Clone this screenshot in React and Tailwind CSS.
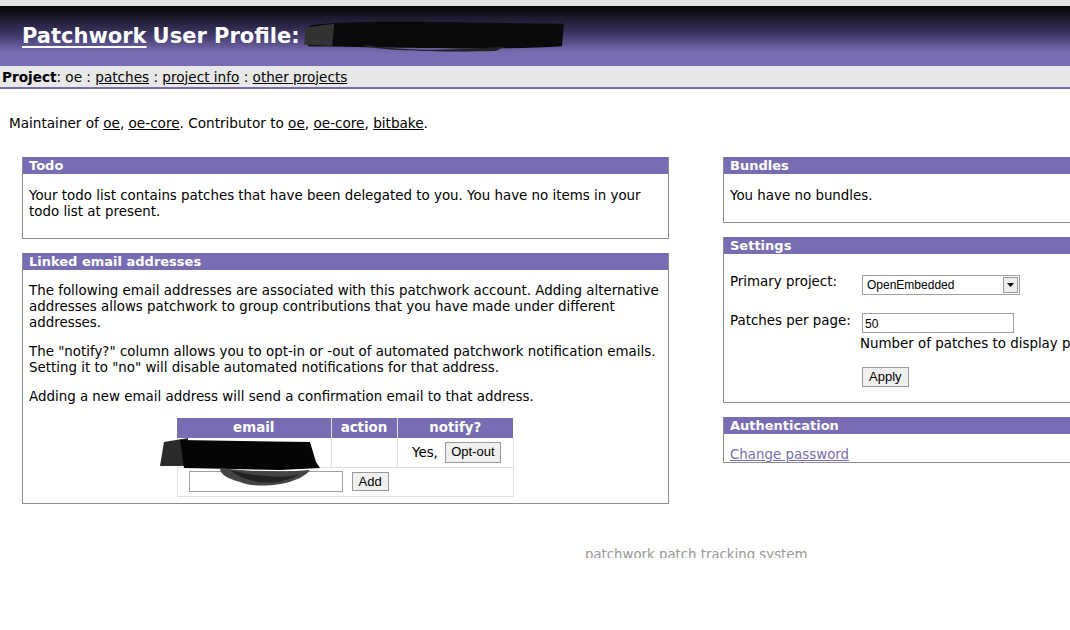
import React from "react";

const font = { fontFamily: '"DejaVu Sans", Verdana, sans-serif' };
const arial = { fontFamily: '"Liberation Sans", Arial, sans-serif' };

function Box({ title, children, className = "" }) {
  return (
    <div className={"border border-[#8c8c8c] border-t-0 bg-white " + className}>
      <div className="bg-[#786db3] text-white font-bold text-[13px] leading-[17px] px-[6px]">{title}</div>
      {children}
    </div>
  );
}

function Scribble({ w, h }) {
  return (
    <svg width={w} height={h} viewBox="0 0 260 36" preserveAspectRatio="none" className="block">
      <path d="M6 8 C40 2 120 4 258 6 L256 30 C200 34 120 32 4 30 Z" fill="#0a0a0a" />
      <path d="M2 10 L30 6 L28 30 L0 28 Z" fill="#333" />
      <path d="M60 28 C100 36 160 34 200 30 L190 35 C150 36 90 36 60 30Z" fill="#222" />
    </svg>
  );
}

export default function App() {
  return (
    <div className="w-[1070px] h-[630px] overflow-hidden bg-white text-black text-[13.4px] leading-[16px]" style={font}>
      <div className="h-[6px] bg-[#e2e2e2]" />
      <div className="h-[60px] bg-[linear-gradient(to_bottom,#050505_0%,#3a3460_45%,#786db3_78%,#786db3_100%)] flex items-center pl-[22px]">
        <h1 className="text-white font-bold text-[21px] leading-[26px] flex items-center">
          <span className="underline underline-offset-[3px] decoration-2">Patchwork</span>
          <span className="ml-[6px]">User Profile:</span>
          <span className="ml-[4px] -mt-[2px]"><Scribble w={262} h={34} /></span>
        </h1>
      </div>
      <div className="h-[21px] bg-[#e8e8e8] border-b-2 border-[#786db3] pl-[2px] flex items-center box-content text-[13.6px]">
        <span><b>Project</b>: oe : <a className="underline">patches</a> : <a className="underline">project info</a> : <a className="underline">other projects</a></span>
      </div>

      <p className="pl-[9px] mt-[26px] text-[13.6px]">
        Maintainer of <a className="underline">oe</a>, <a className="underline">oe-core</a>. Contributor to <a className="underline">oe</a>, <a className="underline">oe-core</a>, <a className="underline">bitbake</a>.
      </p>

      <div className="flex mt-[26px] pl-[22px] gap-[54px]">
        <div className="w-[647px] shrink-0 flex flex-col gap-[14px]">
          <Box title="Todo" className="h-[82px]">
            <p className="px-[6px] pt-[14px]">
              Your todo list contains patches that have been delegated to you. You have no items in your<br />todo list at present.
            </p>
          </Box>
          <Box title="Linked email addresses" className="h-[251px]">
            <div className="px-[6px] pt-[13px] flex flex-col gap-[13px]">
              <p>The following email addresses are associated with this patchwork account. Adding alternative<br />addresses allows patchwork to group contributions that you have made under different<br />addresses.</p>
              <p>The "notify?" column allows you to opt-in or -out of automated patchwork notification emails.<br />Setting it to "no" will disable automated notifications for that address.</p>
              <p>Adding a new email address will send a confirmation email to that address.</p>
            </div>
            <div className="flex justify-center mt-[13px] pr-[1px] relative">
              <table className="border-collapse">
                <thead>
                  <tr className="bg-[#786db3] text-white font-bold">
                    <th className="w-[154px] h-[20px] border-r border-[#e0e0e0]">email</th>
                    <th className="w-[66px] border-r border-[#e0e0e0]">action</th>
                    <th className="w-[116px]">notify?</th>
                  </tr>
                </thead>
                <tbody>
                  <tr className="h-[29px]">
                    <td className="border border-[#e0e0e0] border-t-0"></td>
                    <td className="border border-[#e0e0e0] border-t-0"></td>
                    <td className="border border-[#e0e0e0] border-t-0 text-right pr-[12px] whitespace-nowrap">
                      Yes,{" "}
                      <button className="bg-[#f0f0f0] border border-[#9a9a9a] px-[5px] h-[21px] text-[13px] ml-[3px]" style={arial}>Opt-out</button>
                    </td>
                  </tr>
                  <tr className="h-[29px]">
                    <td colSpan={3} className="border border-[#e0e0e0] pl-[11px]">
                      <div className="flex items-center gap-[9px]">
                        <input className="w-[154px] h-[21px] border border-[#a0a0a0] bg-white" />
                        <button className="bg-[#f0f0f0] border border-[#9a9a9a] px-[6px] h-[19px] text-[13px] leading-[17px]" style={arial}>Add</button>
                      </div>
                    </td>
                  </tr>
                </tbody>
              </table>
              <div className="absolute left-[137px] top-[20px]">
                <svg width="166" height="56" viewBox="0 0 166 56">
                  <path d="M4 4 L28 0 L26 28 L0 28 Z" fill="#2a2a2a" />
                  <path d="M20 2 L150 4 L156 24 L160 30 L120 32 L24 30 Z" fill="#050505" />
                  <path d="M60 30 C90 34 130 34 150 32 C140 46 100 52 80 44 C66 40 60 36 60 30Z" fill="#444" />
                  <path d="M70 32 C100 40 130 40 140 36 C120 48 90 48 70 32Z" fill="#222" />
                </svg>
              </div>
            </div>
          </Box>
        </div>

        <div className="w-[420px] shrink-0 flex flex-col gap-[14px]">
          <Box title="Bundles" className="h-[66px]">
            <p className="px-[6px] pt-[14px]">You have no bundles.</p>
          </Box>
          <Box title="Settings" className="h-[166px]">
            <div className="px-[6px] pt-[21px] grid grid-cols-[132px_1fr] gap-y-[18px]">
              <span className="self-start -mt-[1px]">Primary project:</span>
              <div className="flex">
                <div className="w-[158px] h-[20px] border border-[#a0a0a0] flex items-center justify-between pl-[4px] pr-[1px] text-[12px]" style={arial}>
                  <span>OpenEmbedded</span>
                  <span className="w-[15px] h-[16px] bg-[#eee] border border-[#999] flex items-center justify-center">
                    <svg width="7" height="4" viewBox="0 0 7 4"><path d="M0 0 H7 L3.5 4 Z" fill="#000" /></svg>
                  </span>
                </div>
              </div>
              <span className="self-start">Patches per page:</span>
              <div>
                <div className="w-[152px] h-[20px] border border-[#a0a0a0] pl-[2px] pt-[3px] text-[12px] leading-[14px]" style={arial}>50</div>
                <div className="-ml-[2px] mt-[3px] whitespace-nowrap">Number of patches to display per page.</div>
                <button className="mt-[15px] bg-[#f0f0f0] border border-[#9a9a9a] px-[6px] h-[20px] text-[13px] leading-[18px]" style={arial}>Apply</button>
              </div>
            </div>
          </Box>
          <Box title="Authentication" className="h-[46px]">
            <p className="px-[6px] pt-[13px]"><a className="underline text-[#786db3]">Change password</a></p>
          </Box>
        </div>
      </div>

      <div className="mt-[41px] h-[13px] overflow-hidden pl-[585px] text-[#999] text-[13.3px] leading-[20px] whitespace-nowrap">
        patchwork patch tracking system
      </div>
    </div>
  );
}
